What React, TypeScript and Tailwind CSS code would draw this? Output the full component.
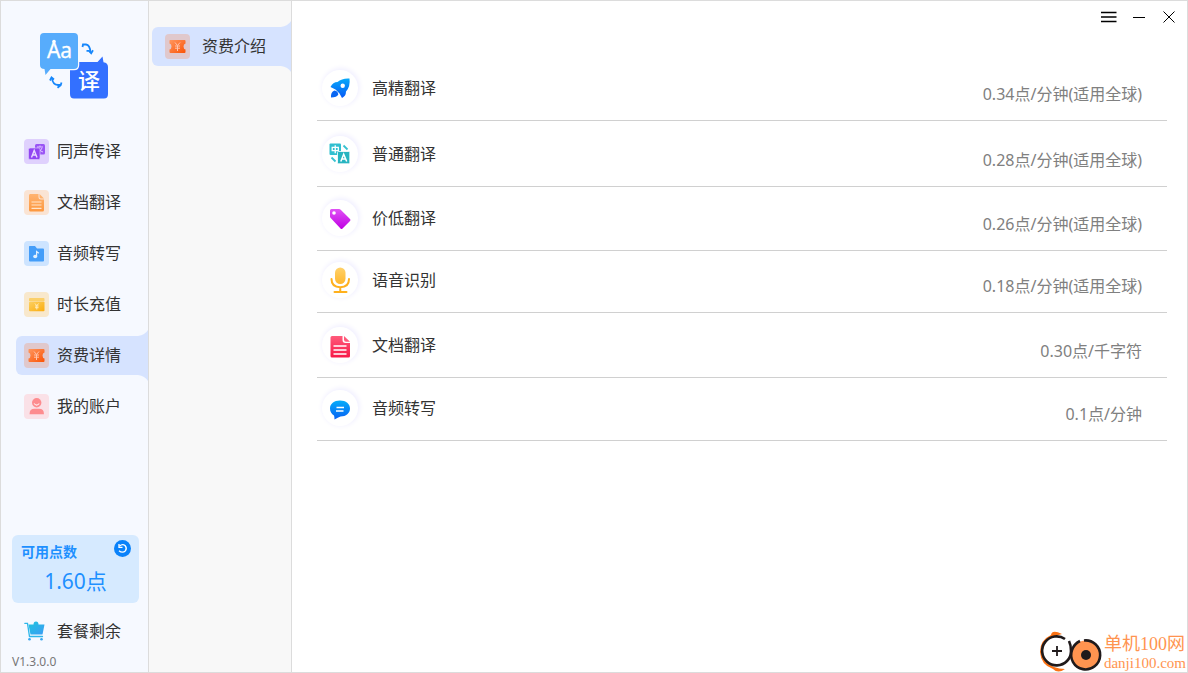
import type { ReactNode } from 'react';

function Logo() {
  return (
    <svg viewBox="0 0 68 66" className="h-[66px] w-[68px]" role="img" aria-label="翻译">
      <path d="M34 29H57.500L62.500 23.500L63.500 29.300Q68 30 68 34V61Q68 65.500 64 65.500H34Q30 65.500 30 61V33Q30 29 34 29Z" fill="#3370ff" />
      <path d="M4 0H34Q38 0 38 4V32Q38 36 34 36H10.500L5.500 42L4.500 36Q0 36 0 32V4Q0 0 4 0Z" fill="#f6f9ff" stroke="#f6f9ff" strokeWidth="2.500" />
      <path d="M4 0H34Q38 0 38 4V32Q38 36 34 36H10.500L5.500 42L4.500 36Q0 36 0 32V4Q0 0 4 0Z" fill="#57acfc" />
      <circle cx="14" cy="8.500" r="1.800" fill="#fff" />
      <text x="19.500" y="25.200" textAnchor="middle" fill="#fff" stroke="#fff" strokeWidth=".3" className="font-['Noto_Sans',sans-serif] text-[21px]">Aa</text>
      <text x="49" y="55.500" textAnchor="middle" fill="#fff" className="font-['Noto_Sans_CJK_SC',sans-serif] text-[22px] font-medium">译</text>
      <g fill="none" stroke="#1687fb" strokeWidth="1.800">
        <path d="M42.500 14L43 11.500H46Q50 12 50.500 19.500" />
        <path d="M46.500 17.800H49L51.200 20.300L53 17.300" />
        <path d="M20.500 52H18Q12.500 51.500 12 45" />
        <path d="M10 47.500L11.500 44.500L14 46.500" />
        <path d="M21.500 49.500L20.700 52.200L17.500 54.800" />
      </g>
    </svg>
  );
}

function SpeechIcon() {
  return (
    <svg viewBox="0 0 25 25" className="h-[25px] w-[25px]" aria-hidden="true">
      <rect width="25" height="25" rx="4" fill="#dfd1fd" />
      <rect x="11" y="5" width="10" height="10.500" rx="1.500" fill="#9a55f5" />
      <path d="M13 8H19M16 6.500V8M14 9Q16 12.500 19 13M18 9Q17 12 14 13" stroke="#dfc6ff" strokeWidth="1" fill="none" />
      <rect x="4.500" y="9" width="11.500" height="11.500" rx="1.500" fill="#9146f2" stroke="#dfd1fd" strokeWidth=".6" />
      <path d="M7.500 18.500L10.200 11.500L13 18.500M8.500 16H12" stroke="#e9dcff" strokeWidth="1.400" fill="none" />
    </svg>
  );
}

function DocumentIcon() {
  return (
    <svg viewBox="0 0 25 25" className="h-[25px] w-[25px]" aria-hidden="true">
      <defs>
        <linearGradient id="docFill" x1="0" y1="0" x2="0" y2="1">
          <stop offset="0" stopColor="#ffb471" />
          <stop offset="1" stopColor="#fd983f" />
        </linearGradient>
      </defs>
      <rect width="25" height="25" rx="4" fill="#fae4d4" />
      <path d="M6 4H14.500V7Q14.500 9.500 17 9.500H20V20Q20 21.500 18.500 21.500H6.500Q5 21.500 5 20V5.500Q5 4 6 4Z" fill="url(#docFill)" />
      <path d="M15.500 4L20 8.500H17Q15.500 8.500 15.500 7Z" fill="#ffb471" />
      <path d="M7.500 12H17.500M7.500 15H17.500M7.500 18.300H17.500" stroke="#ffe5cc" strokeWidth="1.200" />
    </svg>
  );
}

function AudioIcon() {
  return (
    <svg viewBox="0 0 25 25" className="h-[25px] w-[25px]" aria-hidden="true">
      <rect width="25" height="25" rx="4" fill="#cde4ff" />
      <path d="M5.500 5H11L13 7.500H19Q20 7.500 20 8.500V19.500Q20 20.500 19 20.500H6Q5 20.500 5 19.500V6Q5 5 5.500 5Z" fill="#439df9" />
      <ellipse cx="11.200" cy="15.500" rx="2" ry="1.800" fill="#e2f1ff" />
      <path d="M12.600 15.500V10.500L14.800 12.300" stroke="#e2f1ff" strokeWidth="1.200" fill="none" />
    </svg>
  );
}

function RechargeIcon() {
  return (
    <svg viewBox="0 0 25 25" className="h-[25px] w-[25px]" aria-hidden="true">
      <defs>
        <linearGradient id="walletFill" x1="0" y1="0" x2="1" y2="1">
          <stop offset="0" stopColor="#fcd062" />
          <stop offset="1" stopColor="#fbad0d" />
        </linearGradient>
      </defs>
      <rect width="25" height="25" rx="4" fill="#f8e8cc" />
      <path d="M5 9V7Q5 6 6 6H19.500Q20.500 6 20.500 7V9Z" fill="#fbd06a" />
      <rect x="5" y="9.500" width="15.500" height="9.700" rx="1" fill="url(#walletFill)" />
      <path d="M11 11.500L12.800 13.700L14.600 11.500M12.800 13.700V17.500M11 14H14.600M11 15.700H14.600" stroke="#ffeec4" strokeWidth=".9" fill="none" />
    </svg>
  );
}

function TicketIcon() {
  return (
    <svg viewBox="0 0 25 25" className="h-[25px] w-[25px]" aria-hidden="true">
      <defs>
        <linearGradient id="ticketFill" x1="0" y1="0" x2="1" y2="1">
          <stop offset="0" stopColor="#ff9760" />
          <stop offset="1" stopColor="#fb5305" />
        </linearGradient>
      </defs>
      <rect width="25" height="25" rx="4" fill="#e0c8cc" />
      <path d="M5 6H19.500Q20.500 6 20.500 7V9.500Q18.500 10 18.500 12.500Q18.500 15 20.500 15.500V18Q20.500 19 19.500 19H5.500Q4.500 19 4.500 18V15.500Q6.500 15 6.500 12.500Q6.500 10 4.500 9.500V7Q4.500 6 5 6Z" fill="url(#ticketFill)" />
      <path d="M10 8.500L12.500 11.500L15 8.500M12.500 11.500V17M10 12H15M10 14.200H15" stroke="#ffc4ad" strokeWidth="1" fill="none" />
    </svg>
  );
}

function AccountIcon() {
  return (
    <svg viewBox="0 0 25 25" className="h-[25px] w-[25px]" aria-hidden="true">
      <rect width="25" height="25" rx="4" fill="#fae1e7" />
      <circle cx="12.700" cy="8.700" r="4.700" fill="#fd8c8f" />
      <path d="M10 9.500Q12.700 12.700 15.300 9.500" stroke="#fff0f1" strokeWidth="1.100" fill="none" />
      <path d="M5.500 20.200Q5.500 14.800 10.500 14.800H15Q20 14.800 20 20.200Z" fill="#fd8c8f" />
    </svg>
  );
}

function RocketIcon() {
  return (
    <svg viewBox="0 0 36 36" className="h-9 w-9" aria-hidden="true">
      <defs>
        <linearGradient id="rocketFill" x1="0" y1="0" x2="0" y2="1">
          <stop offset="0" stopColor="#08aaf9" />
          <stop offset="1" stopColor="#0758f6" />
        </linearGradient>
      </defs>
      <path d="M27.500 8.500Q28.500 16.500 24 21.500Q24 26 20 28L17.500 23.500L13.500 19.500L8.500 17Q11 12 15.500 12Q20 8 27.500 8.500Z" fill="url(#rocketFill)" />
      <circle cx="20.700" cy="15.700" r="2.200" fill="#fff" />
      <path d="M12.500 20.500Q16 21 16.300 24.500Q15 27.500 9 27.500Q8.500 22 12.500 20.500Z" fill="#0866f2" />
    </svg>
  );
}

function ConvertIcon() {
  return (
    <svg viewBox="0 0 36 36" className="h-9 w-9" aria-hidden="true">
      <rect x="7.500" y="7.500" width="11.500" height="11.500" rx="1" fill="#31bfd0" />
      <path d="M10.200 11.300H16.300V14.600H10.200ZM13.250 9.300V17.300" stroke="#fff" strokeWidth="1.300" fill="none" />
      <rect x="15.500" y="15.500" width="12.300" height="12.300" rx="1" fill="#27b4c0" stroke="#fff" strokeWidth=".8" />
      <path d="M18.800 25.500L21.700 18.200L24.700 25.500M19.800 23H23.700" stroke="#fff" strokeWidth="1.500" fill="none" />
      <path d="M21.500 9.500L25.500 13.500" stroke="#36c1d0" strokeWidth="1.800" fill="none" />
      <path d="M9.500 21.500L13.500 25.500" stroke="#36c1d0" strokeWidth="1.800" fill="none" />
    </svg>
  );
}

function TagIcon() {
  return (
    <svg viewBox="0 0 36 36" className="h-9 w-9" aria-hidden="true">
      <defs>
        <linearGradient id="tagFill" x1="0" y1="0" x2="0" y2="1">
          <stop offset="0" stopColor="#e052f5" />
          <stop offset="1" stopColor="#bf00e3" />
        </linearGradient>
      </defs>
      <path d="M9.500 9H17Q18 9 18.700 9.700L28 19Q29 20 28 21L20.500 28.500Q19.500 29.500 18.500 28.500L8.700 18Q8 17.300 8 16.500V10.500Q8 9 9.500 9Z" fill="url(#tagFill)" />
      <circle cx="12" cy="13" r="1.800" fill="#fff" />
    </svg>
  );
}

function MicrophoneIcon() {
  return (
    <svg viewBox="0 0 36 36" className="h-9 w-9" aria-hidden="true">
      <defs>
        <linearGradient id="micFill" x1="0" y1="0" x2="0" y2="1">
          <stop offset="0" stopColor="#ffd169" />
          <stop offset="1" stopColor="#ffb72e" />
        </linearGradient>
      </defs>
      <rect x="13" y="5.500" width="10.500" height="16.500" rx="5.250" fill="url(#micFill)" />
      <path d="M9.500 17Q9.500 25.200 18.250 25.200Q27 25.200 27 17M18.250 25.200V30M12.500 30H24.500" stroke="#ffb01d" strokeWidth="2" strokeLinecap="round" fill="none" />
    </svg>
  );
}

function RedDocumentIcon() {
  return (
    <svg viewBox="0 0 36 36" className="h-9 w-9" aria-hidden="true">
      <defs>
        <linearGradient id="redDocFill" x1="0" y1="0" x2="0" y2="1">
          <stop offset="0" stopColor="#ff5b7b" />
          <stop offset="1" stopColor="#f71947" />
        </linearGradient>
      </defs>
      <path d="M10 9H20.500V13Q20.500 16 23.500 16H28V29Q28 30.500 26.500 30.500H10Q8.500 30.500 8.500 29V10.500Q8.500 9 10 9Z" fill="url(#redDocFill)" />
      <path d="M22 9L28 14.700H24Q22 14.700 22 12.500Z" fill="#ff5b7b" />
      <path d="M11.500 19H24.500M11.500 23H24.500M11.500 27H24.500" stroke="#fff" strokeWidth="1.300" />
    </svg>
  );
}

function ChatIcon() {
  return (
    <svg viewBox="0 0 36 36" className="h-9 w-9" aria-hidden="true">
      <defs>
        <linearGradient id="chatFill" x1="0" y1="0" x2="0" y2="1">
          <stop offset="0" stopColor="#06adf9" />
          <stop offset="1" stopColor="#0760f4" />
        </linearGradient>
      </defs>
      <path d="M18 10.500C24 10.500 28 14 28 18.500C28 23 24 26.500 18.500 26.500Q16 27.500 12.500 29.500Q12.500 27 12 25.500C9.500 24 8 21.500 8 18.500C8 14 12 10.500 18 10.500Z" fill="url(#chatFill)" />
      <path d="M14.500 17.500H22M14 21H21.500" stroke="#fff" strokeWidth="1.500" />
    </svg>
  );
}

function CartIcon() {
  return (
    <svg viewBox="0 0 22 20" className="h-5 w-[22px]" aria-hidden="true">
      <defs>
        <linearGradient id="cartFill" x1="0" y1="0" x2="1" y2="1">
          <stop offset="0" stopColor="#20c5de" />
          <stop offset="1" stopColor="#3b9cf5" />
        </linearGradient>
      </defs>
      <path d="M4.500 3.500H9.500Q9.500 .5 12 .5Q14.500 .5 14.500 3.500H20.500L18.500 13.500H6.500Z" fill="url(#cartFill)" />
      <path d="M.8 2.300H3.500L5.500 15.500H18.500" stroke="#2db7ea" strokeWidth="1.300" strokeLinecap="round" fill="none" />
      <circle cx="5.500" cy="18.300" r="1.300" fill="#36a6f1" />
      <circle cx="17.500" cy="18.300" r="1.300" fill="#36a6f1" />
    </svg>
  );
}

function RefreshIcon() {
  return (
    <svg viewBox="0 0 17 17" className="h-[17px] w-[17px]" aria-hidden="true">
      <circle cx="8.500" cy="8.500" r="8.500" fill="#0a82fa" />
      <path d="M5.500 6Q8.500 3.500 11 5.500Q13.300 8 11.500 10.700Q8.500 13.500 5 10.700" stroke="#fff" strokeWidth="1.300" fill="none" />
      <path d="M5 4V7.300H8.500" stroke="#fff" strokeWidth="1.300" fill="none" />
    </svg>
  );
}

function Flares() {
  return (
    <>
      <svg viewBox="0 0 10 6" className="absolute -top-[6px] right-0 h-[6px] w-[10px]" aria-hidden="true">
        <path d="M0 6Q7 5 10 0V6Z" fill="#d6e3ff" />
      </svg>
      <svg viewBox="0 0 10 6" className="absolute right-0 -bottom-[6px] h-[6px] w-[10px]" aria-hidden="true">
        <path d="M0 0Q7 1 10 6V0Z" fill="#d6e3ff" />
      </svg>
    </>
  );
}

const navItems: { label: string; icon: ReactNode; active?: boolean }[] = [
  { label: '同声传译', icon: <SpeechIcon /> },
  { label: '文档翻译', icon: <DocumentIcon /> },
  { label: '音频转写', icon: <AudioIcon /> },
  { label: '时长充值', icon: <RechargeIcon /> },
  { label: '资费详情', icon: <TicketIcon />, active: true },
  { label: '我的账户', icon: <AccountIcon /> },
];

const rates: { label: string; price: string; icon: ReactNode; height: string }[] = [
  { label: '高精翻译', price: '0.34点/分钟(适用全球)', icon: <RocketIcon />, height: 'h-[66px]' },
  { label: '普通翻译', price: '0.28点/分钟(适用全球)', icon: <ConvertIcon />, height: 'h-[66px]' },
  { label: '价低翻译', price: '0.26点/分钟(适用全球)', icon: <TagIcon />, height: 'h-[64px]' },
  { label: '语音识别', price: '0.18点/分钟(适用全球)', icon: <MicrophoneIcon />, height: 'h-[62px]' },
  { label: '文档翻译', price: '0.30点/千字符', icon: <RedDocumentIcon />, height: 'h-[65px]' },
  { label: '音频转写', price: '0.1点/分钟', icon: <ChatIcon />, height: 'h-[63px]' },
];

function Sidebar() {
  return (
    <aside className="flex w-[148px] shrink-0 flex-col border-r border-[#dcdcdc] bg-[#f6f9ff]">
      <div className="flex pt-8 pl-[39px]">
        <Logo />
      </div>
      <nav className="mt-[33px] flex flex-col gap-3 pl-[15px]" aria-label="主菜单">
        {navItems.map((item) => (
          <button
            key={item.label}
            type="button"
            aria-current={item.active ? 'page' : undefined}
            className={
              item.active
                ? 'relative flex h-[39px] items-center gap-2 rounded-l-md bg-[#d6e3ff] pl-2'
                : 'flex h-[39px] items-center gap-2 pl-2'
            }
          >
            {item.active && <Flares />}
            {item.icon}
            <span className="pb-0.5">{item.label}</span>
          </button>
        ))}
      </nav>
      <section className="mt-auto mr-[9px] ml-[11px] flex h-[68px] flex-col rounded-md bg-[#d6eaff] pt-[5px] text-[#1e90ff]">
        <div className="flex items-start justify-between pr-2 pl-[9px]">
          <h2 className="text-sm leading-6 font-bold">可用点数</h2>
          <button type="button" aria-label="刷新">
            <RefreshIcon />
          </button>
        </div>
        <p className="text-center text-[21px] leading-[34px]">1.60点</p>
      </section>
      <button type="button" className="mt-4 flex h-6 items-center gap-[11px] pl-[23px]">
        <CartIcon />
        <span>套餐剩余</span>
      </button>
      <p className="mt-[9px] pl-[11px] text-xs leading-5 text-[#777]">V1.3.0.0</p>
    </aside>
  );
}

function SubNav() {
  return (
    <nav className="w-[143px] shrink-0 border-r border-[#dcdcdc] bg-[#f8f8f8] pt-[26px] pl-[3px]" aria-label="资费详情">
      <button type="button" className="relative flex h-[39px] w-full items-center gap-3 rounded-l-md bg-[#d6e3ff] pl-[13px]">
        <Flares />
        <TicketIcon />
        <span className="pb-0.5">资费介绍</span>
      </button>
    </nav>
  );
}

function TitleBar() {
  return (
    <header className="flex h-8 items-center justify-end gap-2 pr-1.5">
      <button type="button" aria-label="菜单" className="flex h-6 w-6 items-center justify-center">
        <svg viewBox="0 0 16 12" className="h-3 w-4" aria-hidden="true">
          <path d="M0 1.500H15.500M0 6H15.500M0 10.500H15.500" stroke="#000" strokeWidth="1.500" />
        </svg>
      </button>
      <button type="button" aria-label="最小化" className="flex h-6 w-5 items-center justify-center">
        <svg viewBox="0 0 12 2" className="h-0.5 w-3" aria-hidden="true">
          <path d="M0 1H12V2H0Z" fill="#000" />
        </svg>
      </button>
      <button type="button" aria-label="关闭" className="flex h-6 w-6 items-center justify-center">
        <svg viewBox="0 0 12 12" className="h-3 w-3" aria-hidden="true">
          <path d="M.5.5L11.500 11.500M11.500.5L.5 11.500" stroke="#000" strokeWidth="1" />
        </svg>
      </button>
    </header>
  );
}

function RateTable() {
  return (
    <div className="mt-[22px] pr-5 pl-[25px]">
      <table className="w-full border-separate border-spacing-0">
        <tbody>
          {rates.map((rate) => (
            <tr key={rate.label} className={rate.height}>
              <th scope="row" className="border-b border-[#d0d0d0] p-0 pb-[14px] text-left align-bottom font-normal">
                <div className="flex items-center gap-[14px] pl-[5px]">
                  <span className="rounded-full bg-white shadow-[1px_-1px_5px_1px_#f1f0ff]">{rate.icon}</span>
                  <span>{rate.label}</span>
                </div>
              </th>
              <td className="border-b border-[#d0d0d0] p-0 pr-[25px] pb-[14px] text-right align-bottom text-[#808080]">{rate.price}</td>
            </tr>
          ))}
        </tbody>
      </table>
    </div>
  );
}

function Watermark() {
  return (
    <a href="#danji100" className="absolute right-px bottom-0 flex items-end gap-0.5 text-[#ff9450]">
      <svg viewBox="0 0 64 42" className="h-[42px] w-16" aria-hidden="true">
        <path d="M24 4Q14-1 13 5Q2 10 2 22Q3 35 15 39Q20 44 27 39Q15 39 9 32Q2 23 8 14Q13 6 24 4Z" fill="#fb7214" />
        <circle cx="19" cy="21" r="14" fill="#fff" />
        <path d="M27 9A14.500 14.500 0 1 0 29 31Q33 27 33 21Q33 15 31 11" fill="none" stroke="#201a1b" strokeWidth="2.600" />
        <circle cx="48" cy="25" r="14.500" fill="#ff9450" />
        <path d="M46 10.500A14.500 14.500 0 1 1 34 20Q36 14 42 11" fill="none" stroke="#201a1b" strokeWidth="2.600" />
        <circle cx="48" cy="25" r="5" fill="#201a1b" />
        <path d="M14 21H24M19 16V26" stroke="#201a1b" strokeWidth="1.800" />
      </svg>
      <span className="flex flex-col font-['Liberation_Serif','Noto_Sans_CJK_SC',serif] whitespace-nowrap">
        <span className="text-lg leading-5">单机100网</span>
        <span className="text-[15px] leading-[18px]">danji100.com</span>
      </span>
    </a>
  );
}

export default function App() {
  return (
    <div className="relative flex min-h-screen border border-[#dcdcdc] bg-white font-['Noto_Sans','Noto_Sans_CJK_SC',sans-serif] text-base text-[#333]">
      <Sidebar />
      <SubNav />
      <main className="min-w-0 flex-1">
        <TitleBar />
        <RateTable />
      </main>
      <Watermark />
    </div>
  );
}
